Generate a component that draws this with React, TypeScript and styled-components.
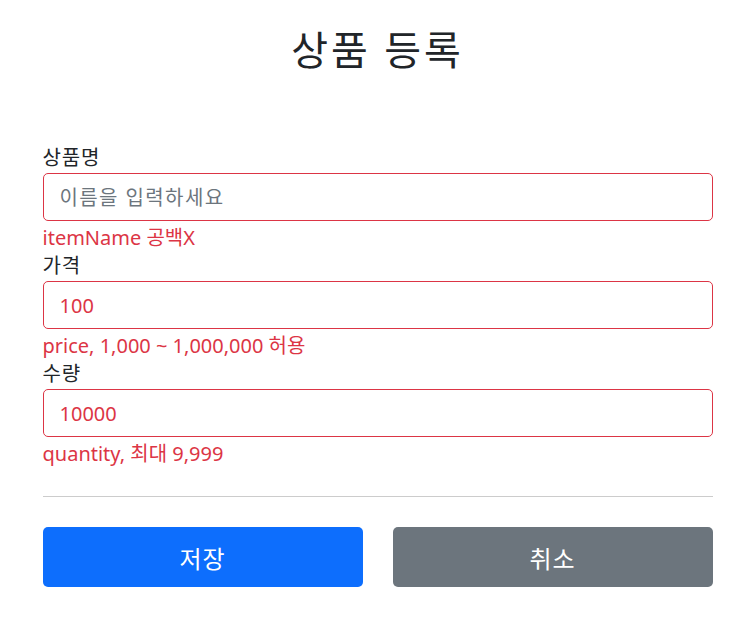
import React from "react";
import styled, { createGlobalStyle } from "styled-components";

const GlobalStyle = createGlobalStyle`
  html, body { margin: 0; padding: 0; background: #fff; }
  body {
    font-family: "Noto Sans", "Noto Sans CJK KR", sans-serif;
    color: #212529;
  }
  * { box-sizing: border-box; }
`;

const Container = styled.div`
  width: 670px;
  margin: 0 auto;
`;

const Title = styled.h2`
  margin: 26px 0 0;
  height: 48px;
  line-height: 48px;
  font-size: 40px;
  font-weight: 400;
  letter-spacing: 0.075em;
  text-align: center;
  color: #212529;
`;

const Form = styled.form`
  margin-top: 69px;
  display: flex;
  flex-direction: column;
`;

const Field = styled.div`
  display: flex;
  flex-direction: column;
`;

const Label = styled.label`
  display: block;
  font-size: 20px;
  line-height: 30px;
  height: 30px;
  letter-spacing: 0.04em;
  color: #212529;
`;

const Input = styled.input<{ $invalid?: boolean }>`
  display: block;
  width: 100%;
  height: 48px;
  padding: 0 16px;
  font-family: inherit;
  font-size: 20px;
  color: ${(p) => (p.$invalid ? "#dc3545" : "#212529")};
  border: 1px solid ${(p) => (p.$invalid ? "#dc3545" : "#ced4da")};
  border-radius: 5px;
  background: #fff;
  outline: none;
  &::placeholder {
    color: #6c757d;
    letter-spacing: 0.07em;
  }
`;

const ErrorText = styled.div`
  margin-top: 4px;
  font-size: 20px;
  line-height: 26px;
  height: 26px;
  color: #dc3545;
`;

const Divider = styled.hr`
  margin: 29px 0 0;
  border: 0;
  border-top: 1px solid #cccccc;
`;

const ButtonRow = styled.div`
  margin-top: 30px;
  display: grid;
  grid-template-columns: 1fr 1fr;
  gap: 30px;
`;

const Button = styled.button<{ $variant: "primary" | "secondary" }>`
  height: 60px;
  border: none;
  border-radius: 5px;
  font-family: inherit;
  font-size: 24px;
  letter-spacing: 0.04em;
  color: #fff;
  cursor: pointer;
  background: ${(p) => (p.$variant === "primary" ? "#0d6efd" : "#6c757d")};
`;

export default function App() {
  return (
    <>
      <GlobalStyle />
      <Container>
        <Title>상품 등록</Title>
        <Form onSubmit={(e) => e.preventDefault()}>
          <Field>
            <Label htmlFor="itemName">상품명</Label>
            <Input id="itemName" $invalid placeholder="이름을 입력하세요" defaultValue="" />
            <ErrorText>itemName 공백X</ErrorText>
          </Field>
          <Field>
            <Label htmlFor="price">가격</Label>
            <Input id="price" $invalid defaultValue="100" />
            <ErrorText>price, 1,000 ~ 1,000,000 허용</ErrorText>
          </Field>
          <Field>
            <Label htmlFor="quantity">수량</Label>
            <Input id="quantity" $invalid defaultValue="10000" />
            <ErrorText>quantity, 최대 9,999</ErrorText>
          </Field>
          <Divider />
          <ButtonRow>
            <Button type="submit" $variant="primary">저장</Button>
            <Button type="button" $variant="secondary">취소</Button>
          </ButtonRow>
        </Form>
      </Container>
    </>
  );
}
